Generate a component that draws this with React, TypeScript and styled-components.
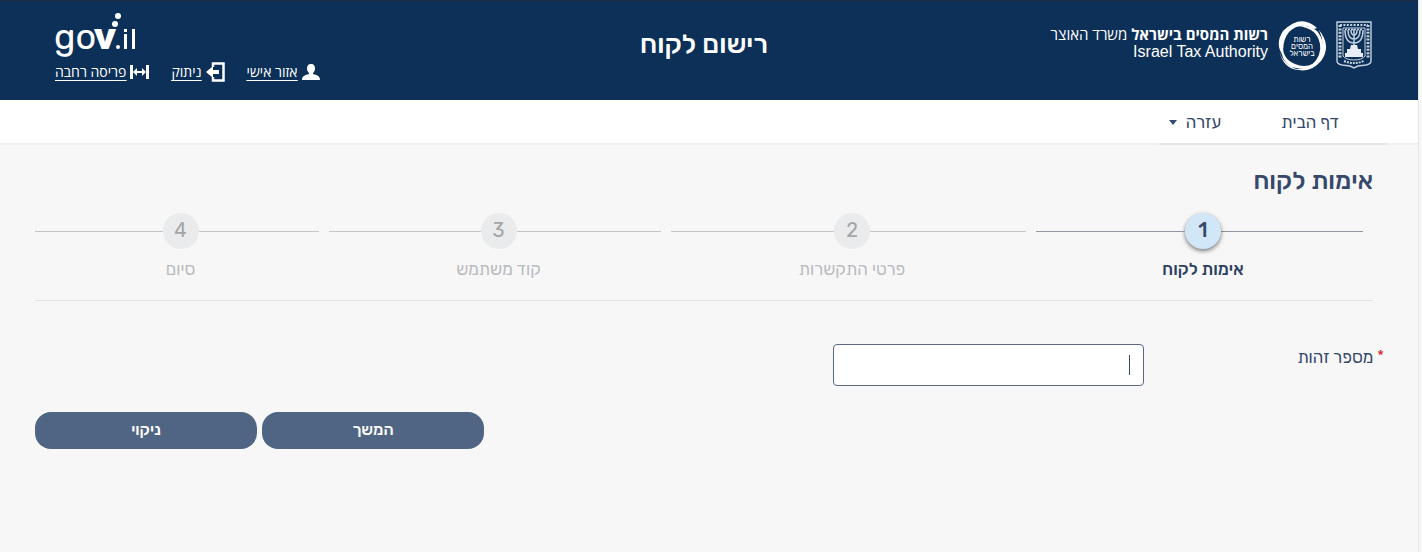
import React from "react";
import styled, { createGlobalStyle, css } from "styled-components";

const GlobalStyle = createGlobalStyle`
  *, *::before, *::after { box-sizing: border-box; }
  html { background: #f7f7f7; }
  body {
    margin: 0;
    font-family: Rubik, "Open Sans", "Liberation Sans", sans-serif;
    font-size: 17px;
    line-height: 20px;
    color: #36486b;
  }
`;

const Page = styled.div`
  min-height: 100vh;
  margin-right: 3px;
  border-right: 1px solid #e6e6e6;
  background: #f7f7f7;
`;

const Header = styled.header`
  display: grid;
  grid-template-columns: 1fr auto 1fr;
  height: 100px;
  padding: 0 46px 0 36px;
  border-top: 1px solid #1d2b40;
  background: #0c3058;
  color: #fff;
`;

const Agency = styled.div`
  display: flex;
  align-items: flex-start;
  gap: 10px;
  padding-top: 20px;
`;

const AgencyName = styled.p`
  margin: 4px 0 0;
  font-family: "Open Sans", "Liberation Sans", sans-serif;
  font-size: 15px;
  line-height: 18px;
`;

const EnglishName = styled.span`
  display: block;
  font-family: "Liberation Sans", sans-serif;
  font-size: 16px;
  text-align: right;
`;

const AppTitle = styled.h1`
  margin: 0;
  padding-top: 28px;
  font-size: 27px;
  line-height: 30px;
  font-weight: 500;
`;

const Account = styled.div`
  display: flex;
  flex-direction: column;
  align-items: flex-end;
  padding: 11px 0 0 19px;
`;

const AccountLinks = styled.nav`
  display: flex;
  gap: 22px;
`;

const AccountLink = styled.a`
  display: flex;
  align-items: center;
  gap: 4px;
  color: #fff;
  font-family: "Open Sans", "Liberation Sans", sans-serif;
  font-size: 14px;
  line-height: 18px;
  text-underline-offset: 3px;
`;

const NavBar = styled.nav`
  height: 45px;
  padding: 0 31px 0 20px;
  background: linear-gradient(#fff 43px, #f0f0f0 43px);
`;

const Menu = styled.ul`
  display: flex;
  gap: 60px;
  width: 228px;
  height: 45px;
  margin: 0;
  padding: 12px 48px 0 0;
  list-style: none;
  border-bottom: 2px solid #e6e6e6;
  white-space: nowrap;
`;

const MenuLink = styled.a`
  color: #36486b;
  text-decoration: none;
`;

const MenuButton = styled.button`
  display: flex;
  align-items: center;
  gap: 9px;
  padding: 0;
  border: 0;
  background: none;
  color: inherit;
  font: inherit;
`;

const Caret = styled.span`
  border: 4px solid transparent;
  border-top: 5px solid #36486b;
  border-bottom: 0;
`;

const Main = styled.main`
  padding: 21px 45px 40px 35px;
`;

const Heading = styled.h2`
  margin: 0;
  font-size: 25px;
  line-height: 30px;
  font-weight: 500;
`;

const Steps = styled.ol`
  display: grid;
  grid-template-columns: 327fr 355fr 332fr 284fr;
  gap: 10px;
  margin: 0;
  padding: 17px 10px 21px 0;
  list-style: none;
  border-bottom: 1px solid #e2e2e2;
`;

const Step = styled.li<{ $current?: boolean }>`
  display: grid;
  grid-template-columns: 1fr 36px 1fr;
  align-items: center;
  row-gap: 10px;
  padding-left: 7px;
  color: ${(p) => (p.$current ? "#2c3f60" : "#b9bbbf")};
  font-weight: ${(p) => (p.$current ? 500 : 400)};

  &::before,
  &::after {
    content: "";
    height: 1px;
    background: ${(p) => (p.$current ? "#8f969f" : "#c4c5c7")};
  }
  &::before { grid-area: 1 / 1; }
  &::after { grid-area: 1 / 3; margin-left: -7px; }
`;

const StepNumber = styled.span<{ $current?: boolean }>`
  grid-area: 1 / 2;
  display: block;
  height: 36px;
  border-radius: 50%;
  background: #eaebec;
  color: #a3a5a8;
  font-size: 20px;
  line-height: 34px;
  text-align: center;
  ${(p) =>
    p.$current &&
    css`
      background: #d1e6f6;
      color: #36486b;
      box-shadow: 0 2px 4px rgba(0, 0, 0, 0.5);
    `}
`;

const StepLabel = styled.span`
  grid-area: 2 / 1 / 3 / 4;
  text-align: center;
`;

const Form = styled.form`
  padding-top: 43px;
`;

const Field = styled.div`
  display: grid;
  grid-template-columns: 229px 311px;
  align-items: start;
`;

const Label = styled.label`
  display: flex;
  gap: 4px;
  margin-right: -11px;
  padding-top: 3px;
`;

const Required = styled.span`
  color: #d8232a;
  font-size: 15px;
  line-height: 18px;
`;

const TextInput = styled.input`
  width: 100%;
  height: 42px;
  padding: 0 13px;
  border: 1px solid #5a6886;
  border-radius: 4px;
  background: #fff;
  color: #36486b;
  font: inherit;
  outline: 0;

  &:placeholder-shown {
    background: linear-gradient(#36486b, #36486b) right 13px center / 1px 20px no-repeat #fff;
    caret-color: transparent;
  }
`;

const Actions = styled.div`
  display: flex;
  justify-content: flex-end;
  gap: 5px;
  padding-top: 26px;
`;

const ActionButton = styled.button`
  width: 222px;
  height: 37px;
  padding: 0 0 2px;
  border: 0;
  border-radius: 16px;
  background: #506583;
  color: #fff;
  font: inherit;
  font-size: 16px;
  font-weight: 500;
`;

const StateEmblem = () => (
  <svg width="36" height="48" viewBox="0 0 36 48" fill="none" stroke="#c3d0de" aria-hidden="true">
    <path d="M1 1h34v39q0 3-5 4l-8 1-4 2-4-2-8-1q-5-1-5-4z" strokeWidth="1.4" />
    <path d="M7 7h22v28q-3 4-11 4T7 35z" strokeWidth="1" />
    <path d="M4 4v34M32 4v34" strokeWidth="3" strokeDasharray="2 1.4" />
    <path d="M4 4h28" strokeWidth="2" strokeDasharray="2 1.4" />
    <path d="M8 40q10 4 20 0" strokeWidth="2" strokeDasharray="2 1" />
    <path d="M9 9q0 13 9 13t9-13M12 9q0 9 6 9t6-9M15 9q0 5 3 5t3-5M18 8v18" strokeWidth="1.5" />
    <path d="M9 8.500h18" strokeWidth="1.5" strokeDasharray="2 1" />
    <path d="M15 24h6l1 4h3v4h2v4H9v-4h2v-4h3z" fill="#e6edf4" stroke="none" />
  </svg>
);

const TaxEmblem = () => (
  <svg width="48" height="50" viewBox="0 0 48 50" fill="#fff" aria-hidden="true">
    <path d="M5 10Q23-8 39 7L36 8Q22 0 11 11Q3 21 6 36Q-4 24 5 10Z" />
    <path d="M20 5Q42 3 45 24Q46 37 34 44Q44 34 42 23Q39 7 20 5Z" />
    <path d="M41 9Q54 25 43 40Q32 53 17 48Q33 48 41 36Q48 23 41 9Z" />
    <path d="M4 22Q4 38 17 43Q26 47 35 43Q26 50 14 46Q1 39 4 22Z" />
    <path d="M1 29Q4 43 21 49Q5 48 1 29Z" />
    <g fontFamily="Rubik, Open Sans, sans-serif" fontSize="8" textAnchor="middle">
      <text x="24" y="21">רשות</text>
      <text x="24" y="28">המסים</text>
      <text x="24" y="35">בישראל</text>
    </g>
  </svg>
);

const GovLogo = () => (
  <svg width="84" height="50" viewBox="0 0 84 50" fill="#fff" direction="ltr" role="img" aria-label="gov.il">
    <g fontSize="36">
      <text x="-1" y="37" fontFamily="Rubik, Open Sans, sans-serif">go</text>
      <text x="39" y="37" fontFamily="Open Sans, sans-serif" fontWeight="800">v</text>
    </g>
    <circle cx="63" cy="35" r="2" />
    <path d="M69 22h3v15h-3zM69 17h3v3h-3zM77 17h3v20h-3z" />
    <circle cx="60" cy="12" r="3" />
    <circle cx="63" cy="4" r="3" />
  </svg>
);

const PersonIcon = () => (
  <svg width="18" height="16" viewBox="0 0 18 16" fill="#fff" aria-hidden="true">
    <path d="M9 0c3 0 4 2 4 4.500C13 7 12 8 11 9v1c4 1 7 2 7 6H0c0-4 3-5 7-6V9C6 8 5 7 5 4.500 5 2 6 0 9 0z" />
  </svg>
);

const LogoutIcon = () => (
  <svg width="19" height="20" viewBox="0 0 19 20" aria-hidden="true">
    <path d="M7 5V1.500h10.500v17H7V15" fill="none" stroke="#fff" strokeWidth="2.500" />
    <path d="M0 10l7-6v4h6v4H7v4z" fill="#fff" />
  </svg>
);

const WidthIcon = () => (
  <svg width="19" height="14" viewBox="0 0 19 14" fill="#fff" aria-hidden="true">
    <path d="M0 0h3v14H0zM16 0h3v14h-3zM3 7l4-4v3h5V3l4 4-4 4V8H7v3z" />
  </svg>
);

const steps = ["אימות לקוח", "פרטי התקשרות", "קוד משתמש", "סיום"];

export default function App() {
  return (
    <>
      <GlobalStyle />
      <Page dir="rtl" lang="he">
        <Header>
          <Agency>
            <StateEmblem />
            <TaxEmblem />
            <AgencyName>
              <b>רשות המסים בישראל</b> משרד האוצר
              <EnglishName dir="ltr">Israel Tax Authority</EnglishName>
            </AgencyName>
          </Agency>
          <AppTitle>רישום לקוח</AppTitle>
          <Account>
            <GovLogo />
            <AccountLinks>
              <AccountLink href="#personal"><PersonIcon /><u>אזור אישי</u></AccountLink>
              <AccountLink href="#logout"><LogoutIcon /><u>ניתוק</u></AccountLink>
              <AccountLink href="#wide"><WidthIcon /><u>פריסה רחבה</u></AccountLink>
            </AccountLinks>
          </Account>
        </Header>
        <NavBar>
          <Menu>
            <li><MenuLink href="#home">דף הבית</MenuLink></li>
            <li><MenuButton type="button">עזרה<Caret /></MenuButton></li>
          </Menu>
        </NavBar>
        <Main>
          <Heading>אימות לקוח</Heading>
          <Steps>
            {steps.map((label, i) => (
              <Step key={label} $current={i === 0}>
                <StepNumber $current={i === 0}>{i + 1}</StepNumber>
                <StepLabel>{label}</StepLabel>
              </Step>
            ))}
          </Steps>
          <Form>
            <Field>
              <Label htmlFor="id-number"><Required>*</Required>מספר זהות</Label>
              <TextInput id="id-number" type="text" placeholder=" " autoFocus />
            </Field>
            <Actions>
              <ActionButton type="button">המשך</ActionButton>
              <ActionButton type="reset">ניקוי</ActionButton>
            </Actions>
          </Form>
        </Main>
      </Page>
    </>
  );
}
